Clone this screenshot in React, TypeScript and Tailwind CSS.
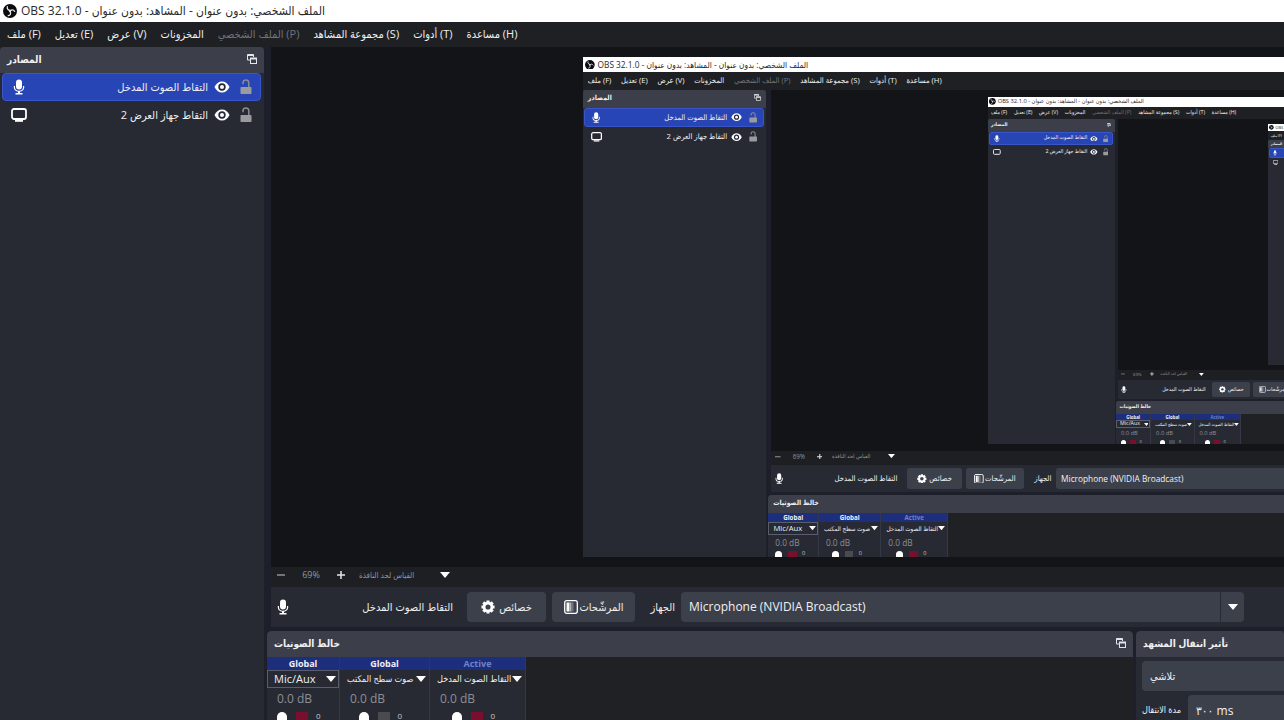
import { useId } from "react";
import clsx from "clsx";

const MAX_DEPTH = 3;

const menus = [
  { label: "ملف (F)" },
  { label: "تعديل (E)" },
  { label: "عرض (V)" },
  { label: "المخزونات" },
  { label: "الملف الشخصي (P)", disabled: true },
  { label: "مجموعة المشاهد (S)" },
  { label: "أدوات (T)" },
  { label: "مساعدة (H)" },
];

const sources = [
  { name: "التقاط الصوت المدخل", icon: "mic", selected: true },
  { name: "التقاط جهاز العرض 2", icon: "display", selected: false },
];

const channels = [
  { name: "Mic/Aux", tag: "Global", muted: true, focused: true, width: "w-[73px]" },
  { name: "صوت سطح المكتب", tag: "Global", muted: false, focused: false, width: "w-[90px]" },
  { name: "التقاط الصوت المدخل", tag: "Active", muted: true, focused: false, width: "w-[96px]" },
];

function ObsLogo() {
  return (
    <svg viewBox="0 0 24 24" className="h-3.5 w-3.5 shrink-0">
      <circle cx="12" cy="12" r="12" fill="#0b0b0d" />
      <g fill="none" stroke="#e8e8ea" strokeWidth="2.2" strokeLinecap="round">
        <path d="M7.5 4.5c-1 3.500 1 6 4 6.300" />
        <path d="M20 12.500c-2.300-3-5.500-3-7.300-.8" />
        <path d="M9 20c3.800-.8 5-3.800 3.400-6.700" />
      </g>
      <circle cx="12" cy="12" r="2" fill="#e8e8ea" />
    </svg>
  );
}

function MicIcon() {
  return (
    <svg viewBox="0 0 12 16" className="h-4 w-3 shrink-0" fill="#fefefe">
      <rect x="3" y="0.500" width="6" height="10" rx="3" />
      <path d="M0.800 7v1.500a5.200 4.300 0 0 0 10.400 0V7h-1.200v1.300a4 3.400 0 0 1-8 0V7z" />
      <path d="M5 12h2v2h2.500v1.500h-7V14H5z" />
    </svg>
  );
}

function DisplayIcon() {
  return (
    <svg viewBox="0 0 16 14" className="h-3.5 w-4 shrink-0">
      <rect x="1" y="1" width="14" height="10" rx="2" fill="none" stroke="#fefefe" strokeWidth="1.800" />
      <path d="M4 12h8v1.800H4z" fill="#fefefe" />
    </svg>
  );
}

function EyeIcon() {
  return (
    <svg viewBox="0 0 16 12" className="h-3 w-4">
      <path d="M0.500 6C2 2.500 4.800 0.500 8 0.500S14 2.500 15.500 6C14 9.500 11.200 11.500 8 11.500S2 9.500 0.500 6z" fill="#fefefe" />
      <circle cx="8" cy="6" r="3.700" fill="#23283a" />
      <circle cx="8" cy="6" r="2" fill="#fefefe" />
    </svg>
  );
}

function UnlockIcon() {
  return (
    <svg viewBox="0 0 12 16" className="h-4 w-3">
      <path d="M3 5.200V4a2.900 2.900 0 0 1 5.800 0v4.500" fill="none" stroke="#8b8d93" strokeWidth="1.500" />
      <rect x="0.500" y="8" width="11" height="7" rx="0.800" fill="#9a9b9f" />
    </svg>
  );
}

function PopoutIcon() {
  return (
    <svg viewBox="0 0 10 10" className="h-2.5 w-2.5" fill="none" stroke="#e4e5e8">
      <path d="M3 6H0.500V0.500h6V3" />
      <path d="M0.500 1.200h6M3.500 4.700h6" strokeWidth="1.600" />
      <rect x="3.500" y="4" width="6" height="5.500" />
    </svg>
  );
}

function GearIcon() {
  return (
    <svg viewBox="0 0 16 16" className="h-3.5 w-3.5 shrink-0">
      <g stroke="#fefefe" strokeWidth="3.600">
        <path d="M8 0.500v15M0.500 8h15M2.700 2.700l10.600 10.600M13.300 2.700L2.700 13.300" />
      </g>
      <circle cx="8" cy="8" r="6" fill="#fefefe" />
      <circle cx="8" cy="8" r="2.900" fill="#3c404b" />
    </svg>
  );
}

function FilterIcon() {
  return (
    <svg viewBox="0 0 14 14" className="h-3.5 w-3.5 shrink-0">
      <rect x="0.700" y="0.700" width="12.600" height="12.600" rx="2" fill="none" stroke="#fefefe" strokeWidth="1.300" />
      <path d="M2.500 2.500h3v9h-3z" fill="#fefefe" />
      <path d="M5.500 2.500h2v9h-2z" fill="#b3b5bb" />
      <path d="M7.500 2.500h2v9h-2z" fill="#74777f" />
    </svg>
  );
}

function Caret() {
  return (
    <svg viewBox="0 0 10 6" className="h-1.5 w-2.5 shrink-0" fill="#fefefe">
      <path d="M0 0h10L5 6z" />
    </svg>
  );
}

function DockHeader({ title, popout = true }: { title: string; popout?: boolean }) {
  return (
    <header className="flex h-[26px] shrink-0 items-center justify-between rounded-t bg-[#3c3f4a] px-[7px] pb-0.5 text-[10px] font-bold">
      <h2>{title}</h2>
      {popout && (
        <button aria-label="فصل اللوحة">
          <PopoutIcon />
        </button>
      )}
    </header>
  );
}

function SourcesDock() {
  return (
    <aside className="flex w-[264px] shrink-0 flex-col rounded-t bg-[#272a33]">
      <DockHeader title="المصادر" />
      <ul>
        {sources.map((source) => (
          <li
            key={source.name}
            className={clsx(
              "mr-[3px] ml-0.5 flex h-7 items-center rounded border px-2",
              source.selected ? "border-[#3a55c8] bg-[#2845b5]" : "border-transparent"
            )}
          >
            <span className="flex w-4 justify-center">
              {source.icon === "mic" ? <MicIcon /> : <DisplayIcon />}
            </span>
            <span dir="rtl" className="flex-1 text-[11px]">
              {source.name}
            </span>
            <button aria-label="إظهار" className="ml-1.5">
              <EyeIcon />
            </button>
            <button aria-label="قفل" className="ml-2.5">
              <UnlockIcon />
            </button>
          </li>
        ))}
      </ul>
    </aside>
  );
}

function PreviewControls() {
  return (
    <div className="ml-1 flex h-5 shrink-0 items-center bg-[#1d1f23] pb-1 text-[9px] text-[#94969b]">
      <button aria-label="تصغير" className="flex w-5 justify-center">
        <svg viewBox="0 0 8 8" className="h-2 w-2" stroke="#c9cacd"><path d="M0 4h8" /></svg>
      </button>
      <span className="w-10 text-center">69%</span>
      <button aria-label="تكبير" className="flex w-5 justify-center">
        <svg viewBox="0 0 8 8" className="h-2 w-2" stroke="#e6e6e8" strokeWidth="1.500"><path d="M0 4h8M4 0v8" /></svg>
      </button>
      <button className="ml-2 flex w-[91px] items-center justify-between text-[8px]">
        القياس لحد النافذة
        <Caret />
      </button>
    </div>
  );
}

function ContextBar() {
  const id = useId();
  return (
    <div className="ml-1 flex h-10 shrink-0 items-center bg-[#272a33] pr-10 pl-1.5 text-[11px]">
      <MicIcon />
      <span dir="rtl" className="w-[164px] shrink-0">
        التقاط الصوت المدخل
      </span>
      <button className="ml-3.5 flex h-[30px] w-[79px] shrink-0 items-center justify-center gap-1 rounded bg-[#3c404b]">
        <GearIcon />
        خصائص
      </button>
      <button className="ml-1.5 flex h-[30px] w-[83px] shrink-0 items-center justify-center gap-0.5 rounded bg-[#3c404b]">
        <FilterIcon />
        المرشّحات
      </button>
      <label htmlFor={id} className="w-[46px] shrink-0 pr-1.5 text-right">
        الجهاز
      </label>
      <div className="grid min-w-0 flex-1 items-center">
        <select id={id} className="col-start-1 row-start-1 h-[30px] w-full appearance-none rounded bg-[#3c404b] px-2 text-xs">
          <option>Microphone (NVIDIA Broadcast)</option>
        </select>
        <span className="pointer-events-none col-start-1 row-start-1 flex h-[30px] w-6 items-center justify-center justify-self-end border-l border-[#272a33]">
          <Caret />
        </span>
      </div>
    </div>
  );
}

function MixerDock() {
  return (
    <section className="flex min-w-0 flex-1 flex-col overflow-hidden rounded-t bg-[#1f2125]">
      <DockHeader title="خالط الصوتيات" />
      <div className="flex min-h-0 flex-1">
        {channels.map((channel) => (
          <div key={channel.name} className={clsx("shrink-0 border-r border-[#343845] bg-[#272a33]", channel.width)}>
            <div
              className={clsx(
                "h-[13px] bg-[#1c2e7c] text-center text-[9px] leading-[13px] font-bold",
                channel.tag === "Active" && "text-[#6f83c9]"
              )}
            >
              {channel.tag}
            </div>
            <button
              className={clsx(
                "flex h-[18px] w-full items-center justify-between border pr-0.5 pl-1.5 whitespace-nowrap",
                channel.focused ? "border-[#5b5e68] text-[11px]" : "border-transparent text-[9px]"
              )}
            >
              {channel.name}
              <Caret />
            </button>
            <div className="h-5 pl-2.5 text-xs leading-[22px] text-[#8d8f96]">0.0 dB</div>
            <div className="flex items-start justify-center gap-2 pt-1">
              <input
                type="range"
                aria-label={channel.name}
                defaultValue={100}
                className="h-40 w-3 appearance-none bg-transparent [direction:rtl] [writing-mode:vertical-lr] [&::-webkit-slider-thumb]:h-5 [&::-webkit-slider-thumb]:w-2.5 [&::-webkit-slider-thumb]:appearance-none [&::-webkit-slider-thumb]:rounded-full [&::-webkit-slider-thumb]:bg-white"
              />
              <span className={clsx("h-40 w-3", channel.muted ? "bg-[#780f2c]" : "bg-[#4a4b4f]")} />
              <span className="w-3.5 text-[8px] leading-[8px] text-[#c4c5c9]">0</span>
            </div>
          </div>
        ))}
      </div>
    </section>
  );
}

function TransitionsDock() {
  const id = useId();
  return (
    <section className="flex w-[148px] shrink-0 flex-col overflow-hidden rounded-tl bg-[#272a33]">
      <DockHeader title="تأثير انتقال المشهد" popout={false} />
      <div className="flex min-h-0 flex-1 flex-col gap-1 pt-1 pl-1.5">
        <select
          aria-label="تأثير انتقال المشهد"
          className="h-[30px] w-full shrink-0 appearance-none rounded-l bg-[#3c404b] px-2 text-[11px]"
        >
          <option>تلاشي</option>
        </select>
        <div className="flex shrink-0 items-center justify-between">
          <label htmlFor={id} className="text-[9px] whitespace-nowrap">
            مدة الانتقال
          </label>
          <input
            id={id}
            defaultValue="٣٠٠ ms"
            className="h-[30px] w-24 rounded-l bg-[#3c404b] px-2 text-xs"
          />
        </div>
      </div>
    </section>
  );
}

// The preview captures the display it is shown on, so each window holds a smaller copy of itself
function ObsWindow({ depth = 0 }: { depth?: number }) {
  return (
    <div
      className={clsx(
        "flex flex-col overflow-hidden bg-[#1d202a] text-[#f0f0f2]",
        depth === 0 ? "h-screen w-full" : "h-full w-[190%] shrink-0 [zoom:0.694]"
      )}
    >
      <div className="flex h-[22px] shrink-0 items-center gap-1 bg-white pl-[3px] text-xs text-[#2a2a2c]">
        <ObsLogo />
        <h1>OBS 32.1.0 - الملف الشخصي: بدون عنوان - المشاهد: بدون عنوان</h1>
      </div>
      <nav className="flex h-[25px] shrink-0 items-center gap-3.5 bg-[#1e2024] pl-[7px] text-[11px] whitespace-nowrap">
        {menus.map((menu) => (
          <button key={menu.label} disabled={menu.disabled} className="disabled:text-[#717379]">
            {menu.label}
          </button>
        ))}
      </nav>
      <div className="flex min-h-0 flex-1 gap-[3px]">
        <SourcesDock />
        <main className="flex min-w-0 flex-1 flex-col">
          <div className="ml-1 flex min-h-0 flex-1 overflow-hidden bg-[#131418] py-2.5 pl-[312px]">
            {depth < MAX_DEPTH && <ObsWindow depth={depth + 1} />}
          </div>
          <PreviewControls />
          <ContextBar />
          <div className="mt-1 flex h-[89px] shrink-0 gap-[3px]">
            <MixerDock />
            <TransitionsDock />
          </div>
        </main>
      </div>
    </div>
  );
}

export default function App() {
  return (
    <div className="font-['Open_Sans','DejaVu_Sans_Condensed','DejaVu_Sans',sans-serif]">
      <ObsWindow />
    </div>
  );
}
